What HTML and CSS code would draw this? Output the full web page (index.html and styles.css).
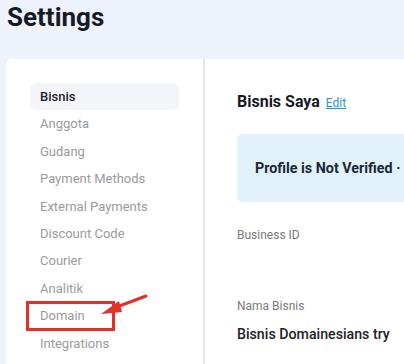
FILE: index.html
```html
<!DOCTYPE html>
<html>
<head>
<meta charset="utf-8">
<link rel="stylesheet" href="styles.css">
</head>
<body>
<h1 class="title">Settings</h1>
<div class="card">
  <nav class="sidebar">
    <div class="item active">Bisnis</div>
    <div class="item">Anggota</div>
    <div class="item">Gudang</div>
    <div class="item">Payment Methods</div>
    <div class="item">External Payments</div>
    <div class="item">Discount Code</div>
    <div class="item">Courier</div>
    <div class="item">Analitik</div>
    <div class="item">Domain</div>
    <div class="item">Integrations</div>
  </nav>
  <main class="main">
    <div class="head"><span class="head-title">Bisnis Saya</span><a class="edit" href="#">Edit</a></div>
    <div class="notice">Profile is Not Verified ·</div>
    <div class="label first">Business ID</div>
    <div class="label second">Nama Bisnis</div>
    <div class="value">Bisnis Domainesians try</div>
  </main>
</div>
<svg class="annot" width="404" height="364" viewBox="0 0 404 364">
  <rect x="27.5" y="302.5" width="86" height="27" fill="none" stroke="#e5302a" stroke-width="3"/>
  <line x1="146" y1="296" x2="114" y2="308" stroke="#e5302a" stroke-width="3" stroke-linecap="round"/>
  <polygon points="101,314 119,301 122,312" fill="#e5302a"/>
</svg>
</body>
</html>
```
FILE: styles.css
```css
html, body {
  margin: 0;
  padding: 0;
}
body {
  background: #eef2fa;
  font-family: Roboto, "Liberation Sans", sans-serif;
  width: 404px;
  height: 364px;
  overflow: hidden;
  position: relative;
}
.title {
  margin: 0;
  padding: 2px 0 0 7px;
  font-size: 26px;
  line-height: 30px;
  font-weight: 700;
  color: #161a26;
  height: 59px;
  box-sizing: border-box;
}
.card {
  margin-left: 6px;
  background: #fff;
  border-top-left-radius: 6px;
  display: flex;
  width: 398px;
  height: 305px;
  overflow: hidden;
}
.sidebar {
  width: 149px;
  padding: 24px 24px 0 24px;
  border-right: 2px solid #e3e7ed;
  flex: none;
}
.item {
  height: 27.4px;
  line-height: 27.4px;
  padding-left: 10px;
  font-size: 13px;
  color: #9b9b9b;
  border-radius: 6px;
}
.item.active {
  background: #f3f5fa;
  color: #1f2126;
  font-weight: 500;
}
.main {
  padding: 33px 0 0 32px;
  flex: 1;
  min-width: 0;
}
.head {
  height: 20px;
  line-height: 20px;
  display: flex;
  align-items: baseline;
  gap: 6px;
}
.head-title {
  font-size: 16px;
  font-weight: 700;
  color: #161a26;
}
.edit {
  font-size: 12px;
  color: #2b8fd1;
  text-decoration: underline;
}
.notice {
  margin-top: 22px;
  height: 68px;
  line-height: 68px;
  background: #e1f2fb;
  border-radius: 5px 0 0 5px;
  padding-left: 18px;
  font-size: 14.3px;
  font-weight: 700;
  color: #1c2736;
  white-space: nowrap;
}
.label {
  font-size: 12px;
  line-height: 16px;
  color: #7a7a7a;
}
.label.first {
  margin-top: 25px;
}
.label.second {
  margin-top: 55px;
}
.value {
  margin-top: 10px;
  font-size: 14.2px;
  line-height: 20px;
  color: #1f2126;
  font-weight: 500;
}
.annot {
  position: absolute;
  left: 0;
  top: 0;
  pointer-events: none;
}
```
